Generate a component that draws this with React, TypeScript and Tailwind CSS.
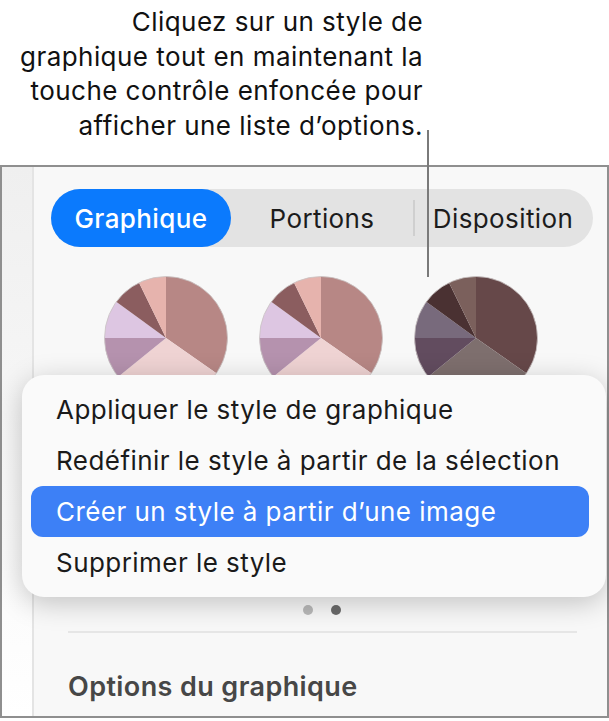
import React from "react";

type Slice = [number, number, string];

const lightPie: string[] = ["#b78785", "#efd3d3", "#b592ae", "#ddc6e2", "#8b5d5f", "#e6b3ad"];
const darkPie: string[] = ["#664849", "#7e6f6e", "#624c5f", "#786a7c", "#4a3132", "#7b605c"];
const angles: [number, number][] = [
  [0, 125],
  [125, 231],
  [231, 270],
  [270, 306],
  [306, 334],
  [334, 360],
];

function point(cx: number, cy: number, r: number, deg: number) {
  const rad = (deg * Math.PI) / 180;
  return [cx + r * Math.sin(rad), cy - r * Math.cos(rad)];
}

function Pie({ colors }: { colors: string[] }) {
  const cx = 62;
  const cy = 62;
  const r = 61.5;
  const slices: Slice[] = angles.map(([a, b], i) => [a, b, colors[i]]);
  return (
    <svg width="124" height="124" viewBox="0 0 124 124">
      {slices.map(([a, b, c], i) => {
        const [x0, y0] = point(cx, cy, r, a);
        const [x1, y1] = point(cx, cy, r, b);
        const large = b - a > 180 ? 1 : 0;
        return <path key={i} d={`M${cx} ${cy} L${x0} ${y0} A${r} ${r} 0 ${large} 1 ${x1} ${y1} Z`} fill={c} />;
      })}
      <circle cx={cx} cy={cy} r={r} fill="none" stroke="#c9c3c3" strokeWidth="0.8" />
    </svg>
  );
}

const menuItems = [
  "Appliquer le style de graphique",
  "Redéfinir le style à partir de la sélection",
  "Créer un style à partir d’une image",
  "Supprimer le style",
];

export default function App() {
  return (
    <div className="relative w-[609px] h-[721px] overflow-hidden bg-white font-['Inter',sans-serif] text-[#111]">
      {/* callout */}
      <div className="w-[423px] pt-[5px] text-right text-[26px] leading-[34.5px] tracking-[0.45px]">
        <p>Cliquez sur un style de</p>
        <p>graphique tout en maintenant la</p>
        <p>touche contrôle enfoncée pour</p>
        <p>afficher une liste d’options.</p>
      </div>
      <div className="absolute left-[427px] top-[130px] h-[147px] w-[2px] bg-[#7a7a7a] z-10" />

      {/* inspector frame */}
      <div className="absolute left-0 top-[165px] flex h-[553px] w-[609px] border-2 border-[#8f8f8f]">
        <div className="w-[32px] border-r-2 border-[#e4e4e4] bg-gradient-to-b from-[#efefef] to-white" />
        <div className="flex flex-1 flex-col bg-[#f8f8f8]">
          <div className="ml-[17px] mr-[14px] mt-[22px] flex h-[58px] items-center rounded-full bg-[#e3e3e3] text-[26px] tracking-[0.4px] text-[#1c1c1c]">
            <div className="flex h-full w-[180px] items-center justify-center rounded-full bg-[#0b7afd] font-medium text-white">
              Graphique
            </div>
            <div className="flex w-[182px] items-center justify-center">Portions</div>
            <div className="h-[36px] w-[2px] bg-[#cfcfcf]" />
            <div className="flex flex-1 items-center justify-center pr-[2px]">Disposition</div>
          </div>
          <div className="ml-[70px] mt-[29px] flex gap-[31px]">
            <Pie colors={lightPie} />
            <Pie colors={lightPie} />
            <Pie colors={darkPie} />
          </div>
          <div className="mt-[205px] flex justify-center gap-[18px] pl-[2px]">
            <span className="h-[10px] w-[10px] rounded-full bg-[#b9b9b9]" />
            <span className="h-[10px] w-[10px] rounded-full bg-[#6b6b6b]" />
          </div>
          <div className="ml-[34px] mr-[30px] mt-[16px] h-[2px] bg-[#e6e6e6]" />
          <div className="ml-[34px] mt-[34px] text-[27px] font-semibold tracking-[0.4px] text-[#474747]">Options du graphique</div>
        </div>
      </div>

      {/* context menu */}
      <div className="absolute left-[22px] top-[375px] z-20 w-[584px] rounded-[22px] bg-[#fafafa] py-[9px] text-[26px] tracking-[0.45px] text-[#1a1a1a] shadow-[0_6px_28px_rgba(0,0,0,0.22)]">
        {menuItems.map((item, i) => (
          <div
            key={item}
            className={
              i === 2
                ? "ml-[9px] mr-[17px] flex h-[51px] items-center rounded-[12px] bg-[#3d80f6] pl-[25px] text-white"
                : "flex h-[51px] items-center pl-[34px]"
            }
          >
            {item}
          </div>
        ))}
      </div>
    </div>
  );
}
